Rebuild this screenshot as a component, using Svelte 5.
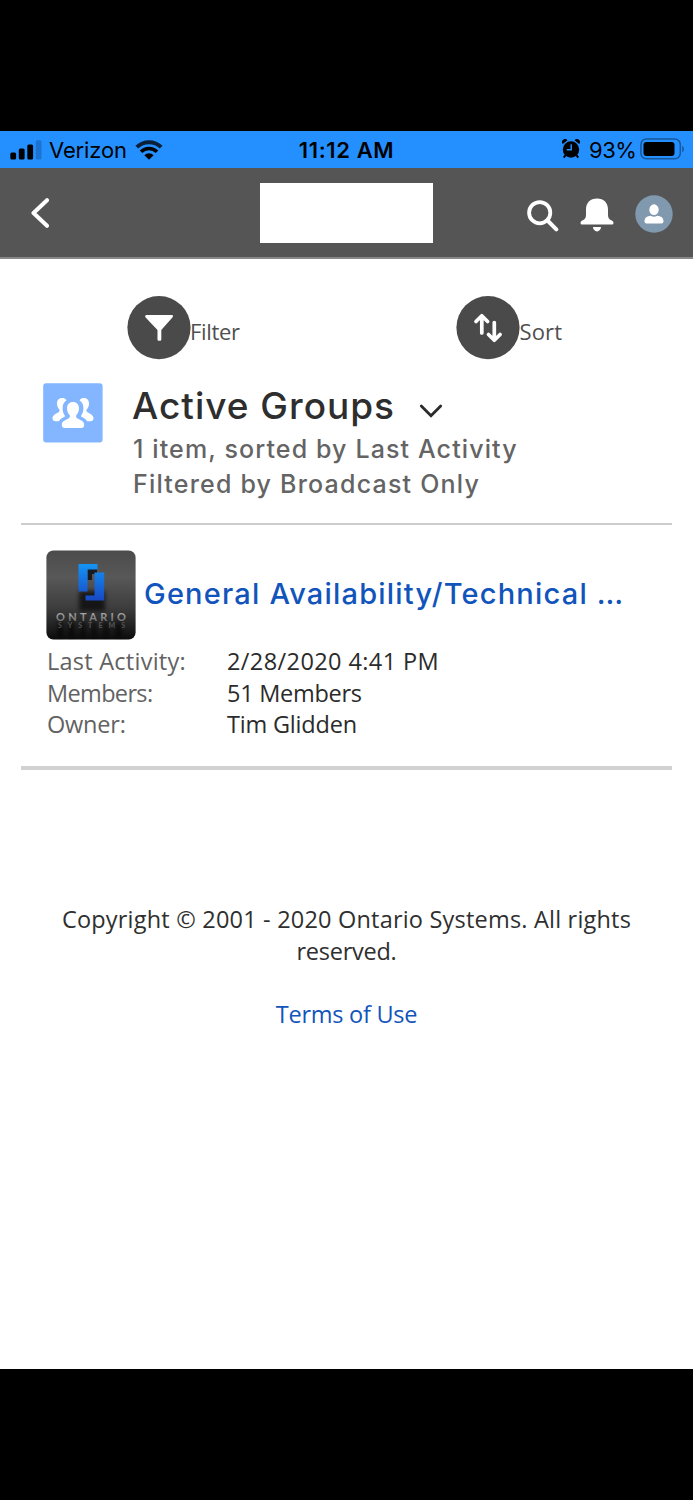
<script>
    let details = [
        { label: "Last Activity:", value: "2/28/2020 4:41 PM", name: "activity" },
        { label: "Members:", value: "51 Members", name: "members" },
        { label: "Owner:", value: "Tim Glidden", name: "owner" }
    ];
</script>

<div class="phone">
    <div class="status">
        <div class="carrier">
            <svg width="32" height="20" viewBox="0 0 32 20">
                <rect x="0.3" y="12.5" width="5.8" height="7" rx="1.5" />
                <rect x="8.8" y="8.5" width="5.8" height="11" rx="1.5" />
                <rect x="17.3" y="4.5" width="5.8" height="15" rx="1.5" />
                <rect x="25.8" y="0.3" width="5.6" height="19.2" rx="1.5" fill="#1c72cf" />
            </svg>
            <span class="network">Verizon</span>
            <svg width="28" height="20" viewBox="0 0 28 20">
                <path d="M1.8 7.2A17.3 17.3 0 0 1 26.2 7.2" fill="none" stroke="#0b213b" stroke-width="4" />
                <path d="M6 11.8A11.3 11.3 0 0 1 22 11.8" fill="none" stroke="#000" stroke-width="3.7" />
                <path d="M14 19.8L9.4 15.2A6.6 6.6 0 0 1 18.6 15.2Z" />
            </svg>
        </div>
        <span class="time">11:12 AM</span>
        <div class="power">
            <svg class="alarm" width="18" height="20" viewBox="0 0 18 20">
                <circle cx="9" cy="10.5" r="8.2" />
                <path d="M0.8 5A3 3 0 0 1 5.5 1.2ZM17.2 5A3 3 0 0 0 12.5 1.2Z" />
                <path d="M3.5 16L1.8 18.6M14.5 16L16.2 18.6" stroke="#000" stroke-width="2" />
                <path d="M9.2 5.2V10.8H4.7" fill="none" stroke="#2490ff" stroke-width="1.5" />
            </svg>
            <span class="percent">93%</span>
            <svg class="battery" width="45" height="22" viewBox="0 0 45 22">
                <rect x="0.9" y="1" width="39.4" height="19.8" rx="5.5" fill="none" stroke="#17579b" stroke-width="1.5" />
                <rect x="3.5" y="4" width="31" height="14" rx="3" />
                <path d="M42.2 7.5Q44 9 44 11T42.2 14.5Z" fill="#17579b" />
            </svg>
        </div>
    </div>

    <header>
        <svg class="back" width="20" height="32" viewBox="0 0 20 32">
            <path d="M18 3.2L4.5 16L18 28.8" fill="none" stroke="#fff" stroke-width="4" stroke-linecap="round" stroke-linejoin="round" />
        </svg>
        <div class="logo"></div>
        <div class="actions">
            <svg class="search" width="32" height="32" viewBox="0 0 32 32">
                <circle cx="12.7" cy="12.7" r="10.6" fill="none" stroke="#fff" stroke-width="3.8" />
                <path d="M20.5 20.5L29.3 29.3" stroke="#fff" stroke-width="4" stroke-linecap="round" />
            </svg>
            <svg class="bell" width="34" height="34" viewBox="0 0 34 34">
                <path fill="#fff" d="M17 .5C10 .5 6 5 6 11.5V17C6 20 4.7 21.5 2.2 22.5Q.5 23.3.5 25Q.5 26.5 2 26.5H32Q33.5 26.5 33.5 25Q33.5 23.3 31.8 22.5C29.3 21.5 28 20 28 17V11.5C28 5 24 .5 17 .5Z" />
                <path fill="#fff" d="M13 29H21A4 4.4 0 0 1 13 29Z" />
            </svg>
            <svg class="avatar" width="38" height="38" viewBox="0 0 38 38">
                <circle cx="19" cy="19" r="18.7" fill="#8199af" />
                <ellipse cx="19" cy="14.7" rx="4.7" ry="5.4" fill="#fff" />
                <path fill="#fff" d="M9.5 26.5C9.5 22.5 12 21.2 15.8 20.8Q19 22.8 22.2 20.8C26 21.2 28.5 22.5 28.5 26.5Q28.5 28.5 26.5 28.5H11.5Q9.5 28.5 9.5 26.5Z" />
            </svg>
        </div>
    </header>

    <main>
        <div class="tools">
            <div class="tool">
                <svg width="64" height="64" viewBox="0 0 64 64">
                    <circle cx="32" cy="31.6" r="31.6" fill="#4a4a4a" />
                    <path fill="#fff" d="M19.2 19H45.2Q46.8 19.6 45.6 21.2L34.3 34V43.5Q34.3 44.8 33 44.8H31.8Q30.5 44.8 30.5 43.5V34L18.4 21.2Q17.5 19.6 19.2 19Z" />
                </svg>
                <span class="filter">Filter</span>
            </div>
            <div class="tool">
                <svg width="64" height="64" viewBox="0 0 64 64">
                    <circle cx="32" cy="31.6" r="31.6" fill="#4a4a4a" />
                    <path d="M25.8 37V20.5M20 25.5L25.8 19.8L31.6 25.5M38.3 26.5V43M32.5 38.5L38.3 44.2L44.1 38.5" fill="none" stroke="#fff" stroke-width="3.7" stroke-linecap="round" stroke-linejoin="round" />
                </svg>
                <span class="sort">Sort</span>
            </div>
        </div>

        <div class="heading">
            <svg width="60" height="60" viewBox="0 0 60 60">
                <rect x="0.2" y="0.2" width="59.4" height="59.4" rx="3" fill="#83b6ff" />
                <g fill="#fff">
                    <path d="M23.5 17.3C22.5 15.6 21 15 19 15C15.8 15 14 17.3 14 20.4C14 23 15 25 16.2 26.3C17 27.3 16.5 28.7 15.2 29.4C12 31 9.5 32.5 9.5 35.2C9.5 37 10.7 38.2 12.5 38.2H15.8C17.5 35.5 20 34.4 22.2 33.2C20.2 30.5 19.6 27.8 19.6 25C19.6 21.6 21 19 23.5 17.3Z" />
                    <path d="M36.5 17.3C37.5 15.6 39 15 41 15C44.2 15 46 17.3 46 20.4C46 23 45 25 43.8 26.3C43 27.3 43.5 28.7 44.8 29.4C48 31 50.5 32.5 50.5 35.2C50.5 37 49.3 38.2 47.5 38.2H44.2C42.5 35.5 40 34.4 37.8 33.2C39.8 30.5 40.4 27.8 40.4 25C40.4 21.6 39 19 36.5 17.3Z" />
                    <path d="M30 19C33.8 19 36 21.6 36 25.2C36 28 35 30.2 33.6 31.8C32.5 33.2 33 34.8 34.8 35.7C38.5 37.3 41.2 38.5 41.2 41.7Q41.2 45 38.2 45H21.8Q18.8 45 18.8 41.7C18.8 38.5 21.5 37.3 25.2 35.7C27 34.8 27.5 33.2 26.4 31.8C25 30.2 24 28 24 25.2C24 21.6 26.2 19 30 19Z" />
                </g>
            </svg>
            <div class="titles">
                <h1>
                    <span>Active Groups</span>
                    <svg width="24" height="16" viewBox="0 0 24 16">
                        <path d="M2.3 3L12 12.7L21.7 3" fill="none" stroke="#2b2b2b" stroke-width="2.8" stroke-linecap="round" />
                    </svg>
                </h1>
                <p class="sorted">1 item, sorted by Last Activity</p>
                <p>Filtered by Broadcast Only</p>
            </div>
        </div>

        <div class="card">
            <div class="group">
                <svg width="90" height="90" viewBox="0 0 90 90">
                    <defs>
                        <linearGradient id="wall" x1="0" y1="0" x2="0" y2="1">
                            <stop offset="0" stop-color="#4b4b4b" />
                            <stop offset="0.3" stop-color="#585858" />
                            <stop offset="0.65" stop-color="#3c3c3c" />
                            <stop offset="1" stop-color="#0c0c0c" />
                        </linearGradient>
                        <linearGradient id="blue" x1="0" y1="13" x2="0" y2="50" gradientUnits="userSpaceOnUse">
                            <stop offset="0" stop-color="#1496f5" />
                            <stop offset="1" stop-color="#1749c4" />
                        </linearGradient>
                        <linearGradient id="metal" x1="0" y1="0" x2="0" y2="1">
                            <stop offset="0.2" stop-color="#aaa" />
                            <stop offset="1" stop-color="#666" />
                        </linearGradient>
                        <filter id="soft"><feGaussianBlur stdDeviation="2.2" /></filter>
                    </defs>
                    <rect x="0.4" y="0.4" width="89.2" height="89.2" rx="7" fill="url(#wall)" />
                    <g filter="url(#soft)" fill="#000" opacity="0.65">
                        <path d="M33 41H59V61H33Z" />
                        <path d="M12 72H17V87H12ZM23 72H28V87H23ZM35 72H39V87H35ZM46 72H50V87H46ZM58 72H62V87H58ZM70 72H75V87H70Z" />
                    </g>
                    <path d="M41.5 19H51V24H46V30H41.5Z" fill="#171b20" />
                    <path d="M32.5 14H51.5V19.5H41.5V41.5H32.5Z" fill="url(#blue)" />
                    <path d="M48.5 22.5H58.2V50.5H39.5V45.5H48.5Z" fill="url(#blue)" />
                    <text class="brand" x="10" y="71" textLength="70" fill="url(#metal)">ONTARIO</text>
                    <text class="sub" x="12" y="78" textLength="67" fill="#555">SYSTEMS</text>
                </svg>
                <a class="name" href="#group">General Availability/Technical …</a>
            </div>
            <dl>
                {#each details as item}
                    <dt class={item.name}>{item.label}</dt>
                    <dd class={item.name}>{item.value}</dd>
                {/each}
            </dl>
        </div>

        <footer>
            <p>Copyright © 2001 - 2020 Ontario Systems. All rights<br /><span class="reserved">reserved.</span></p>
            <a class="terms" href="#terms">Terms of Use</a>
        </footer>
    </main>
</div>

<style>
    :global(body) {
        margin: 0;
        background: #000;
    }
    .phone {
        box-sizing: border-box;
        height: 1500px;
        padding: 131px 0;
        background: #000;
        display: flex;
        flex-direction: column;
        font-family: "Open Sans", sans-serif;
        overflow: hidden;
    }
    svg {
        display: block;
        flex: none;
    }
    span, p, dt, dd, a {
        white-space: nowrap;
    }
    a {
        text-decoration: none;
        color: #1154bb;
    }
    .status {
        height: 37px;
        flex: none;
        background: #2490ff;
        display: grid;
        grid-template-columns: 1fr 96px 1fr;
        align-items: center;
        font-family: Inter, sans-serif;
        font-size: 22px;
        line-height: 38px;
        color: #000;
    }
    .carrier {
        display: flex;
        align-items: center;
        padding-left: 10px;
    }
    .network {
        width: 93px;
        padding-left: 7px;
        box-sizing: border-box;
        letter-spacing: -0.15px;
    }
    .time {
        font-weight: 600;
        text-align: center;
        letter-spacing: 0.6px;
    }
    .power {
        display: flex;
        align-items: center;
        justify-content: flex-end;
        padding-right: 8px;
    }
    .alarm, .battery {
        margin-top: -2px;
    }
    .percent {
        width: 51px;
        margin-left: 9px;
        letter-spacing: -0.5px;
    }
    header {
        height: 91px;
        flex: none;
        box-sizing: border-box;
        background: #555;
        border-bottom: 2px solid #888;
        display: grid;
        grid-template-columns: 1fr 173px 1fr;
        align-items: center;
    }
    .back {
        margin-left: 29px;
        margin-top: 1px;
    }
    .logo {
        height: 60px;
        background: #fff;
        margin-top: 1px;
    }
    .actions {
        display: flex;
        align-items: center;
        justify-content: flex-end;
        padding: 4px 20px 0 0;
    }
    .search {
        margin: 2px -1px 0 0;
    }
    .bell {
        margin: 0 21px 0 22px;
    }
    .avatar {
        margin-top: -1px;
    }
    main {
        flex: 1;
        background: #fff;
        padding: 0 21px;
    }
    .tools {
        display: grid;
        grid-template-columns: 329.4px 1fr;
        padding: 37px 0 0 106px;
        height: 64px;
    }
    .tool {
        display: flex;
        align-items: center;
        font-size: 22px;
        line-height: 30px;
        color: #4f4f4f;
    }
    .tool span {
        padding-top: 5px;
        margin-left: -1px;
    }
    .filter {
        letter-spacing: -0.35px;
    }
    .sort {
        letter-spacing: 0.2px;
    }
    .heading {
        display: flex;
        box-sizing: border-box;
        height: 165px;
        padding: 23px 0 0 22px;
        border-bottom: 2px solid #ccc;
    }
    .titles {
        margin-left: 30px;
        font-family: Inter, sans-serif;
    }
    h1 {
        display: flex;
        align-items: center;
        margin: 0;
        height: 49px;
        font-weight: 500;
        font-size: 37px;
        line-height: 46px;
        letter-spacing: 1px;
        color: #2e2e2e;
    }
    h1 span {
        margin: -3px 0 0 -1px;
    }
    h1 svg {
        margin: 6px 0 0 24px;
    }
    .titles p {
        margin: 0;
        height: 35px;
        font-size: 25px;
        font-weight: 500;
        line-height: 35px;
        letter-spacing: 1.2px;
        color: #646464;
    }
    .titles .sorted {
        letter-spacing: 1.12px;
    }
    .card {
        box-sizing: border-box;
        height: 246px;
        padding: 26px 0 0 25px;
        border-bottom: 4px solid #d2d2d2;
        margin-top: -1px;
    }
    .group {
        display: flex;
        align-items: center;
        height: 90px;
    }
    .brand {
        font: 700 11px Lato, sans-serif;
    }
    .sub {
        font: 700 7px Lato, sans-serif;
    }
    .name {
        margin: -2px 0 0 8px;
        font: 500 29px/40px Inter, sans-serif;
        letter-spacing: 1.2px;
    }
    dl {
        display: grid;
        grid-template-columns: 180px 1fr;
        grid-auto-rows: 31.5px;
        margin: 6px 0 0 1px;
        font-size: 23.5px;
        line-height: 31.5px;
    }
    dt {
        color: #626262;
    }
    dd {
        margin: 0;
        color: #2b2b2b;
    }
    dt.activity {
        letter-spacing: 0.25px;
    }
    dd.activity {
        letter-spacing: 0.4px;
    }
    dt.members {
        letter-spacing: -0.65px;
    }
    dd.members {
        letter-spacing: -0.28px;
    }
    .owner {
        letter-spacing: -0.2px;
    }
    footer {
        padding-top: 133px;
        text-align: center;
        font-size: 23.5px;
        line-height: 32px;
        letter-spacing: 0.2px;
        color: #2f2f2f;
    }
    footer p {
        margin: 0 0 31px;
    }
    .reserved, .terms {
        letter-spacing: -0.25px;
    }
</style>
